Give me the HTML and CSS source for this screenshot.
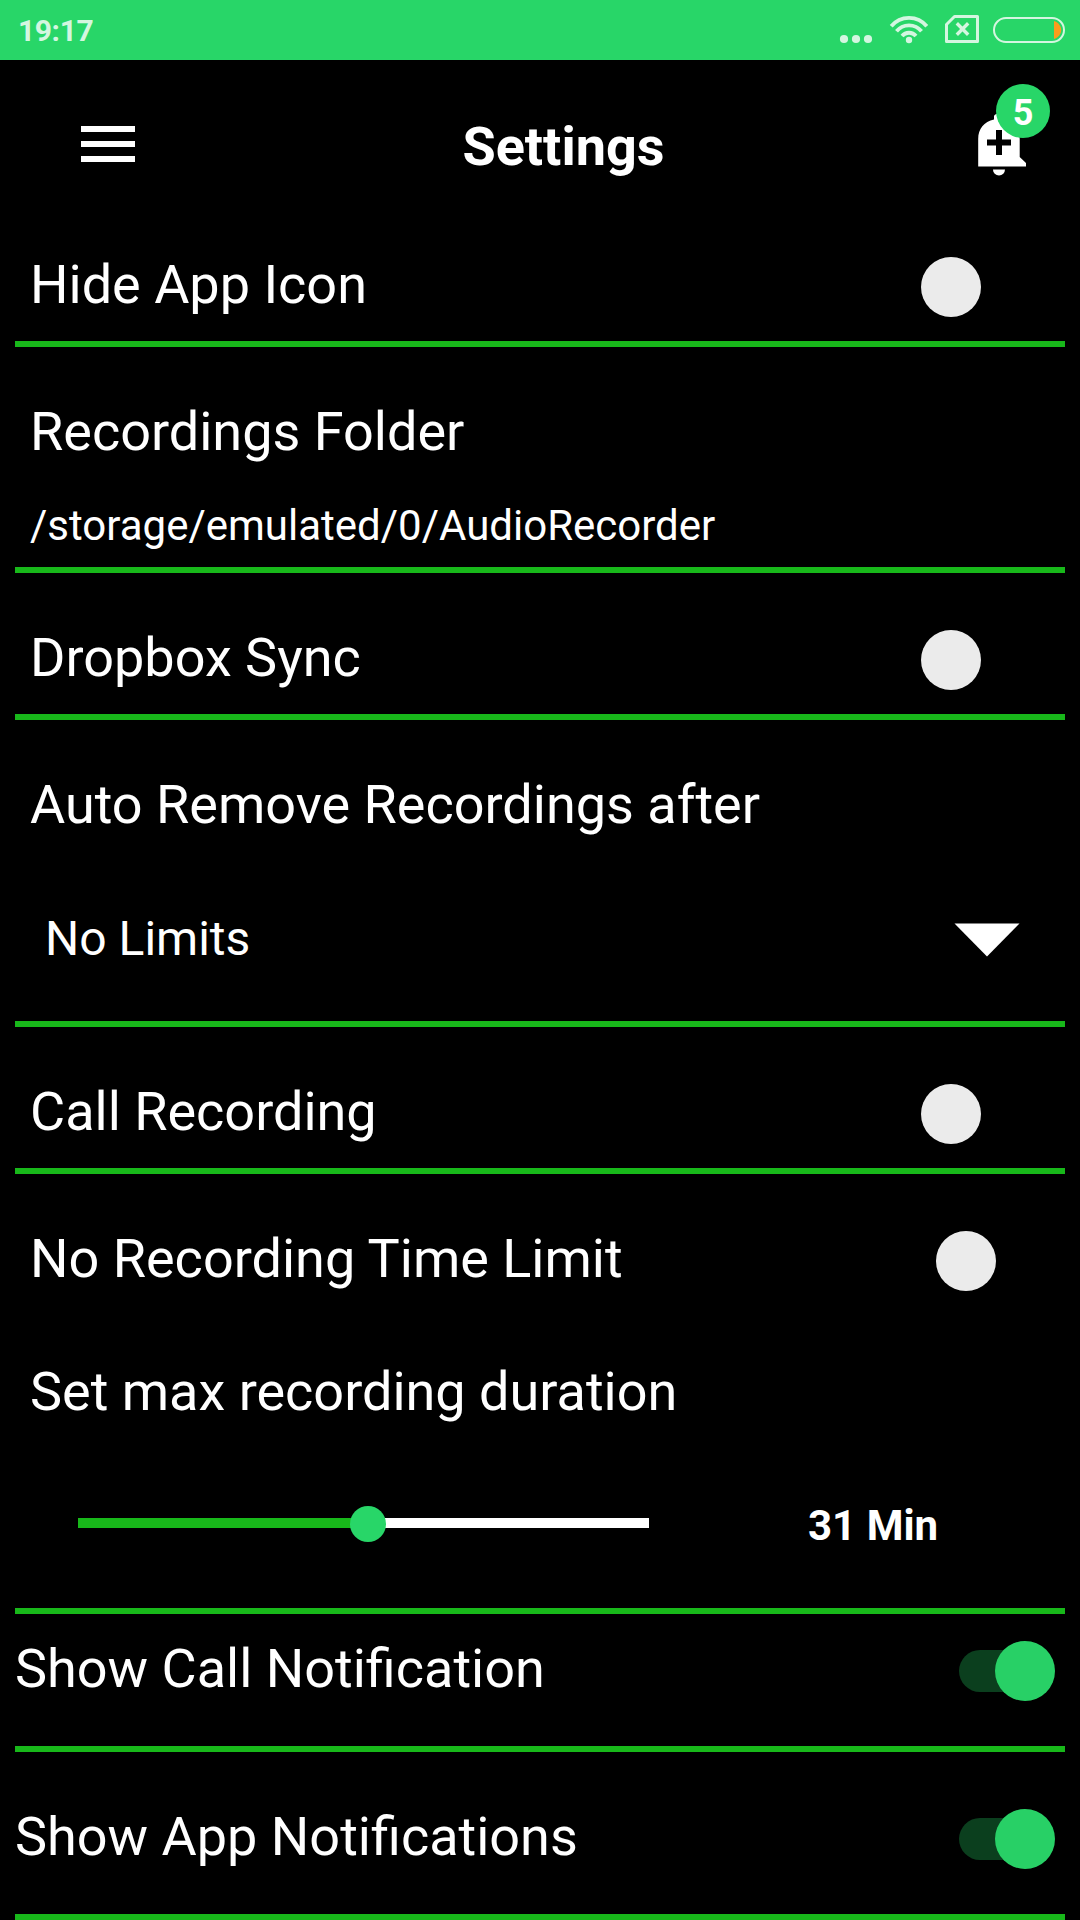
FILE: index.html
```html
<!DOCTYPE html>
<html lang="en">
<head>
<meta charset="utf-8">
<title>Settings</title>
<link rel="stylesheet" href="styles.css">
</head>
<body>
<div class="status-bar">
  <span class="clock">19:17</span>
  <svg class="status-icons" width="260" height="60" viewBox="0 0 260 60" fill="none" stroke="#d4f6e0">
    <g fill="#d4f6e0" stroke="none">
      <circle cx="24" cy="39" r="4.1"/><circle cx="36" cy="39" r="4.1"/><circle cx="48" cy="39" r="4.1"/>
      <circle cx="89" cy="40" r="3.2"/>
    </g>
    <path stroke-width="3.8" d="M71.200 26.300A23 23 0 0 1 106.800 26.300M76.500 31.300A16 16 0 0 1 101.500 31.300M82 36A9.200 9.200 0 0 1 96 36"/>
    <path stroke-width="3" stroke-linejoin="round" d="M134.500 16.500H157.500V41.500H126.500V24.500Z"/>
    <path stroke-width="3.4" d="M136.800 23.300l11.400 11.400M148.200 23.300l-11.400 11.400"/>
    <rect x="174" y="18" width="70" height="24" rx="12" stroke-width="2"/>
    <path d="M234 21c4 1 7.200 5 7.200 9s-3.200 8-7.200 9z" fill="#fc9c1c" stroke="none"/>
  </svg>
</div>
<header class="app-bar">
  <button class="menu" aria-label="Menu"><i></i><i></i><i></i></button>
  <h1 class="title">Settings</h1>
  <div class="alerts">
    <svg width="50" height="64" viewBox="0 0 50 64" fill="#fff">
      <path d="M1.200 53.500V26C1.200 16 7 8.500 17 6.500V3Q18 0.500 22 0.500H27v6C37 8.500 42.700 16 42.700 26v18L49 50V53.500Z"/>
      <path d="M16 56.500h12a6 6 0 0 1-12 0z"/>
      <path d="M19 17h6v9.500h9v6h-9v9.500h-6v-9.500H10v-6h9z" fill="#000"/>
    </svg>
    <span class="badge">5</span>
  </div>
</header>
<main class="settings">
  <section class="row hide-icon"><span>Hide App Icon</span><span class="switch"></span></section>
  <section class="folder"><div>Recordings Folder</div><div class="path">/storage/emulated/0/AudioRecorder</div></section>
  <section class="row spaced"><span>Dropbox Sync</span><span class="switch"></span></section>
  <section class="auto-remove">
    <div>Auto Remove Recordings after</div>
    <div class="select"><span>No Limits</span><svg class="arrow" width="66" height="34" viewBox="0 0 66 34"><path d="M0.500 0.500H65.500L33 33.500Z" fill="#fff"/></svg></div>
  </section>
  <section class="row spaced"><span>Call Recording</span><span class="switch"></span></section>
  <section class="limit">
    <div class="row no-limit"><span>No Recording Time Limit</span><span class="switch"></span></div>
    <div class="max">Set max recording duration</div>
    <div class="duration"><div class="track"><div class="fill" style="width:50.800%"></div><div class="knob"></div><div class="rest"></div></div><span class="minutes">31 Min</span></div>
  </section>
  <section class="row call-note"><span>Show Call Notification</span><span class="switch on"></span></section>
  <section class="row app-note"><span>Show App Notifications</span><span class="switch on"></span></section>
</main>
</body>
</html>
```

FILE: styles.css
```css
* { box-sizing: border-box; }
body { margin: 0; width: 1080px; height: 1920px; overflow: hidden; background: #000; color: #fff; font-family: Roboto, sans-serif; font-size: 54px; line-height: 64px; }
.status-bar { height: 60px; background: #28d668; display: flex; justify-content: space-between; }
.clock { padding-left: 18px; font-size: 30px; letter-spacing: -0.4px; line-height: 61px; font-weight: 700; color: #d4f6e0; }
.app-bar { height: 172px; display: flex; justify-content: space-between; align-items: flex-start; padding: 0 53px 0 81px; }
.menu { display: flex; flex-direction: column; gap: 9px; width: 54px; margin-top: 66px; padding: 0; border: 0; background: none; }
.menu i { height: 6px; width: 54px; background: #fff; }
.title { margin: 55px 0 0 15px; font-size: 54px; line-height: 64px; font-weight: 700; }
.alerts { position: relative; width: 50px; height: 64px; margin-top: 53px; }
.alerts svg { display: block; }
.badge { position: absolute; left: 19px; top: -29px; width: 54px; height: 54px; border-radius: 50%; background: #28d668; font-size: 36px; line-height: 58px; font-weight: 700; text-align: center; }
.settings { padding: 0 15px; }
section { border-bottom: 6px solid #18b81a; padding: 0 15px; }
.row { display: flex; justify-content: space-between; align-items: flex-start; }
.switch { flex: none; width: 60px; height: 60px; border-radius: 50%; margin: 3.5px 69.5px 0 0; background: #ebebeb; }
.hide-icon { height: 115px; padding-top: 21px; }
.folder { height: 226px; padding-top: 53px; }
.path { margin-top: 37px; font-size: 42px; line-height: 49px; }
.spaced { height: 147px; padding-top: 53px; }
.auto-remove { height: 307px; padding-top: 53px; }
.select { display: flex; justify-content: space-between; align-items: center; height: 56px; margin: 74px 30px 0 15px; font-size: 48px; line-height: 56px; }
.arrow { margin-top: 2px; }
.limit { height: 440px; padding-top: 53px; }
.no-limit .switch { margin-right: 54.5px; }
.max { margin-top: 69px; }
.duration { display: flex; align-items: center; height: 50px; margin: 75px 0 0 48px; }
.track { display: flex; align-items: center; width: 571px; height: 36px; }
.fill, .rest { height: 10px; margin-bottom: 3px; }
.fill { background: #18b81a; }
.knob { flex: none; width: 36px; height: 36px; margin: 0 -18px; border-radius: 50%; background: #28d668; z-index: 1; }
.rest { flex: 1; background: #fff; }
.minutes { margin: 4px 0 0 159px; font-size: 42px; font-weight: 700; line-height: 50px; }
.call-note, .app-note { padding: 0; }
.call-note { height: 138px; padding-top: 23px; }
.app-note { height: 168px; padding-top: 53px; }
.switch.on { margin-right: 10.5px; background: #28d066; position: relative; }
.switch.on::before { content: ""; position: absolute; z-index: -1; left: -35.5px; top: 9.5px; width: 84px; height: 42px; border-radius: 21px; background: #0b3f1e; }
```
